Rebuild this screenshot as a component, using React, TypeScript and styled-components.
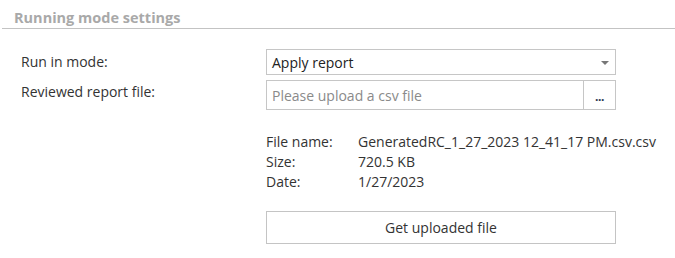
import React from "react";
import styled, { createGlobalStyle } from "styled-components";

const Global = createGlobalStyle`
  html, body { margin: 0; padding: 0; background: #fff; }
  body { font-family: "Open Sans", "Noto Sans", "Liberation Sans", sans-serif; font-size: 14px; color: #333; }
`;

const Page = styled.div`
  width: 675px;
  height: 258px;
  box-sizing: border-box;
  padding-left: 2px;
`;

const SectionHeader = styled.h2`
  margin: 0;
  padding: 10px 0 3px 12px;
  font-size: 14.5px;
  font-weight: 700;
  line-height: 15px;
  color: #a9a9a9;
  border-bottom: 1px solid #c3c3c3;
`;

const Form = styled.div`
  display: grid;
  grid-template-columns: 245px 350px;
  row-gap: 5px;
  padding: 20px 0 0 19px;
  align-items: center;
`;

const Label = styled.label<{ $shift?: number }>`
  font-size: 14px;
  color: #333;
  line-height: 20px;
  margin-top: ${(p) => p.$shift ?? 0}px;
`;

const Select = styled.div`
  position: relative;
  height: 26px;
  box-sizing: border-box;
  border: 1px solid #c6c6c6;
  display: flex;
  align-items: center;
  padding-left: 5px;
  color: #222;
`;

const Arrow = styled.span`
  position: absolute;
  right: 6px;
  top: 11px;
  width: 0;
  height: 0;
  border-left: 4px solid transparent;
  border-right: 4px solid transparent;
  border-top: 4px solid #777;
`;

const InputGroup = styled.div`
  height: 30px;
  box-sizing: border-box;
  border: 1px solid #c6c6c6;
  display: flex;
`;

const Placeholder = styled.div`
  flex: 1;
  display: flex;
  align-items: center;
  padding-left: 5px;
  color: #8a8a8a;
`;

const BrowseButton = styled.div`
  width: 32px;
  border-left: 1px solid #c6c6c6;
  display: flex;
  align-items: flex-end;
  justify-content: center;
  padding-bottom: 8px;
  box-sizing: border-box;
  font-size: 12px;
  font-weight: 700;
  color: #2a3550;
  line-height: 8px;
  letter-spacing: -0.5px;
`;

const Details = styled.div`
  margin: 22px 0 0 264px;
  display: grid;
  grid-template-columns: 92px auto;
  line-height: 20px;
  color: #333;
`;

const ActionButton = styled.button`
  display: block;
  margin: 19px 0 0 264px;
  width: 350px;
  height: 33px;
  background: #fff;
  border: 1px solid #c4c4c4;
  font-family: inherit;
  font-size: 14px;
  color: #333;
  padding: 0;
`;

export default function App() {
  return (
    <Page>
      <Global />
      <SectionHeader>Running mode settings</SectionHeader>
      <Form>
        <Label>Run in mode:</Label>
        <Select>
          Apply report
          <Arrow />
        </Select>
        <Label $shift={-6}>Reviewed report file:</Label>
        <InputGroup>
          <Placeholder>Please upload a csv file</Placeholder>
          <BrowseButton>...</BrowseButton>
        </InputGroup>
      </Form>
      <Details>
        <span>File name:</span>
        <span>GeneratedRC_1_27_2023 12_41_17 PM.csv.csv</span>
        <span>Size:</span>
        <span>720.5 KB</span>
        <span>Date:</span>
        <span>1/27/2023</span>
      </Details>
      <ActionButton>Get uploaded file</ActionButton>
    </Page>
  );
}
